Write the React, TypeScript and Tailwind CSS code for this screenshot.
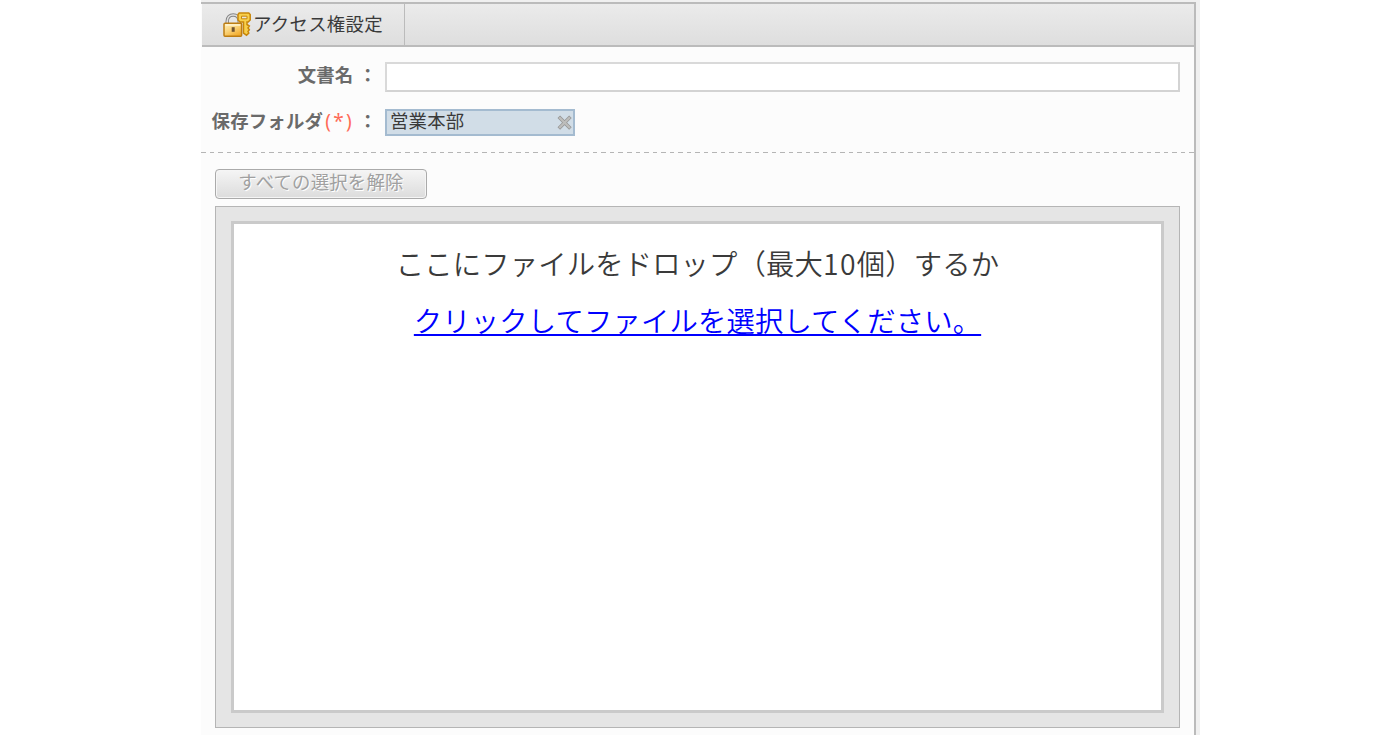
function LockKeyIcon() {
  return (
    <svg width="28" height="26" viewBox="0 0 28 26" className="shrink-0">
      <defs>
        <linearGradient id="gold" x1="0" y1="0" x2="0.7" y2="1">
          <stop offset="0" stopColor="#fff1c0" />
          <stop offset="0.5" stopColor="#fad47c" />
          <stop offset="1" stopColor="#f3ac2c" />
        </linearGradient>
      </defs>
      <path d="M4.2 12V9.5C4.2 5 7 3 10.2 3s6 2 6 6.5V12" fill="none" stroke="#858585" strokeWidth="3.4" />
      <path d="M4.2 12V9.5C4.2 5 7 3 10.2 3s6 2 6 6.5V12" fill="none" stroke="#dedede" strokeWidth="1.6" />
      <path d="M16.2 1h9.6l1.4 1.5v5.5l-2 2h-1.2v2.5l2.3 1.5-1.3 2 1.3 1.8-1.3 1.7.8 1.5-2.3 2.2-3-2V10H17l-2-2V2.500z" fill="#f8d04c" stroke="#c8860a" strokeWidth="1.5" />
      <path d="M18.500 4.200h5.500v2.600h-5.500z" fill="#e8e6df" stroke="#c8860a" strokeWidth="1" />
      <rect x="1" y="11.2" width="17.6" height="13" rx="1" fill="url(#gold)" stroke="#bd7d12" strokeWidth="1.5" />
      <path d="M2.500 13h14.800" stroke="#fff8dc" strokeWidth="1.3" />
      <rect x="8.7" y="15.200" width="3" height="4.600" fill="#705330" />
    </svg>
  );
}

function CloseIcon() {
  return (
    <svg width="15" height="15" viewBox="0 0 15 15" className="mt-1 shrink-0">
      <path d="M1.800 1.800l11.600 11.600M13.400 1.800L1.800 13.400" stroke="#949494" strokeWidth="3.6" />
      <path d="M2.200 2.200l10.800 10.800M13 2.200L2.200 13" stroke="#bdbdbb" strokeWidth="2.3" />
    </svg>
  );
}

export default function App() {
  return (
    <div className="flex h-[736px] w-[1400px] overflow-hidden bg-white pl-[201px] font-['Noto_Sans_CJK_JP',sans-serif] text-[18.4px] tracking-[0.2px] text-[#3a3a3a]">
      <div className="flex h-[735px] w-[999px] bg-[#f0f0f0] pt-[2px]">
        <main className="flex w-[995px] flex-col border-t-2 border-r-2 border-[#bbb] bg-[#fcfcfc]">
          <header className="ml-[1px] flex h-[43px] shrink-0 border-b-2 border-[#bbb] bg-linear-to-b from-[#ebebeb] to-[#dedede]">
            <div className="flex w-[203px] items-center gap-[2px] border-r border-[#bbb] pl-[21px] leading-[41px]">
              <LockKeyIcon />
              <span className="-mt-[3px] tracking-[0.3px] whitespace-nowrap">アクセス権設定</span>
            </div>
          </header>

          <div className="mt-[15px] flex h-[30px] shrink-0 pr-[14px]">
            <div className="w-[176px] text-right leading-[24px] font-bold whitespace-nowrap text-[#6a6a6a]">
              文書名<span className="ml-[5px]">：</span>
            </div>
            <input
              aria-label="文書名"
              className="ml-[8px] h-[30px] min-w-0 flex-1 border-2 border-t-[#d9d9d9] border-r-[#d3d3d3] border-b-[#d3d3d3] border-l-[#d9d9d9] bg-white px-1 outline-none"
            />
          </div>

          <div className="mt-[17px] flex h-[27px] shrink-0">
            <div className="flex w-[176px] justify-end leading-[23px] font-bold whitespace-nowrap text-[#6a6a6a]">
              <span>保存フォルダ</span>
              <span className="ml-[2px] font-['Noto_Sans',sans-serif] text-[19px] leading-[25px] font-normal tracking-[2.3px] text-[#ff6b57]">(*)</span>
              <span className="ml-[4.5px]">：</span>
            </div>
            <div className="ml-[8px] flex w-[190px] justify-between border-2 border-[#a4bbd0] bg-[#d1dde7] pr-[1px] pl-[3px] leading-[19px]">
              <span>営業本部</span>
              <CloseIcon />
            </div>
          </div>

          <div className="mt-[16px] h-[1px] shrink-0 bg-[repeating-linear-gradient(90deg,#b5b5b5_0px,#b5b5b5_4.5px,transparent_4.5px,transparent_8.52px)]" />

          <div className="mt-[16px] ml-[14px] flex h-[30px] shrink-0">
            <button
              disabled
              className="w-[212px] rounded-[4px] border-[1.5px] border-[#aaa] bg-linear-to-b from-[#f5f5f5] to-[#dcdcdc] pb-[6px] leading-[22px] tracking-[0.2px] whitespace-nowrap text-[#a0a0a0] shadow-[inset_0_0_0_1px_#f5f5f5] [text-shadow:1px_1px_0_#fff]"
            >
              すべての選択を解除
            </button>
          </div>

          <section className="mt-[7px] ml-[14px] flex h-[522px] w-[965px] shrink-0 border border-[#b5b5b5] bg-[#e5e5e5] px-[15px] py-[14px]">
            <div className="flex flex-1 flex-col items-center border-[3px] border-[#cacaca] bg-white pt-[10px] text-[28.35px] leading-[57px] font-[350] tracking-[0.15px]">
              <p className="whitespace-nowrap">
                ここにファイルをドロップ（最大
                <span className="tracking-[1.3px]">10</span>
                個）するか
              </p>
              <a href="#" className="whitespace-nowrap text-[#00f] underline decoration-2 underline-offset-[2px] [text-decoration-skip-ink:none]">
                クリックしてファイルを選択してください。
              </a>
            </div>
          </section>
        </main>
      </div>
    </div>
  );
}
